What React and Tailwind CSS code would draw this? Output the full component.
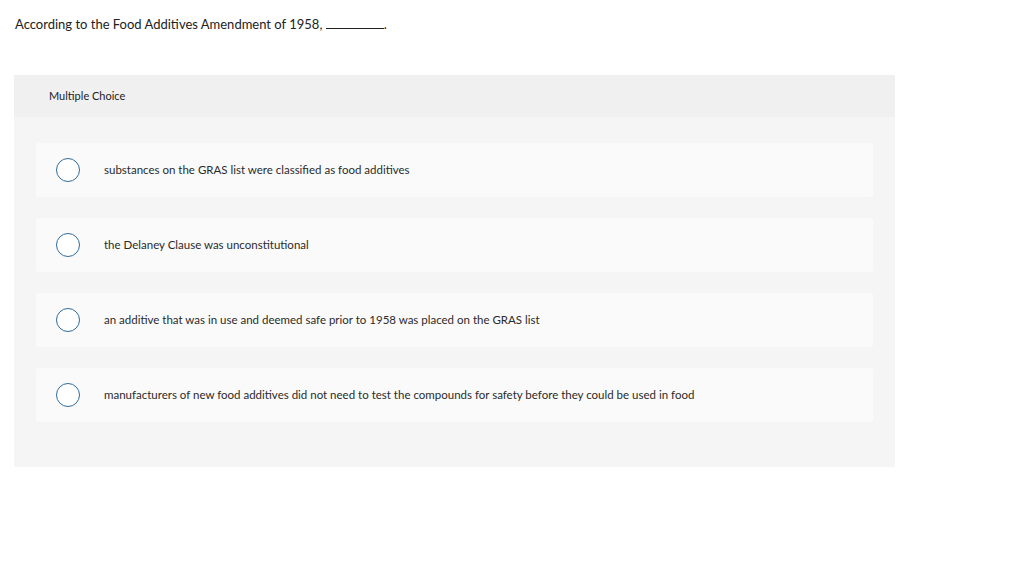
const options = [
  'substances on the GRAS list were classified as food additives',
  'the Delaney Clause was unconstitutional',
  'an additive that was in use and deemed safe prior to 1958 was placed on the GRAS list',
  'manufacturers of new food additives did not need to test the compounds for safety before they could be used in food',
]

export default function App() {
  return (
    <div className="min-h-[565px] bg-white text-[#222] font-['Lato',sans-serif]">
      <p className="pl-[15px] pt-[15px] text-[13px] leading-[18px]">
        According to the Food Additives Amendment of 1958, <span className="inline-block w-[58px] border-b border-[#222] align-baseline"></span>.
      </p>

      <div className="ml-[14px] mt-[42px] w-[881px] rounded-[2px] bg-[#f5f5f5]">
        <div className="flex h-[42px] items-center bg-[#f0f0f0] pl-[35px] text-[11px]">Multiple Choice</div>
        <div className="flex flex-col gap-[21px] px-[22px] pt-[26px] pb-[45px]">
          {options.map((o) => (
            <div key={o} className="flex h-[54px] items-center rounded-[2px] bg-[#fafafa] pl-[20px]">
              <span className="h-[24px] w-[24px] shrink-0 rounded-full border border-[#2f6b9a] bg-white"></span>
              <span className="ml-[24px] text-[11.5px] leading-[14px] text-[#2a2a2a]">{o}</span>
            </div>
          ))}
        </div>
      </div>
    </div>
  )
}
